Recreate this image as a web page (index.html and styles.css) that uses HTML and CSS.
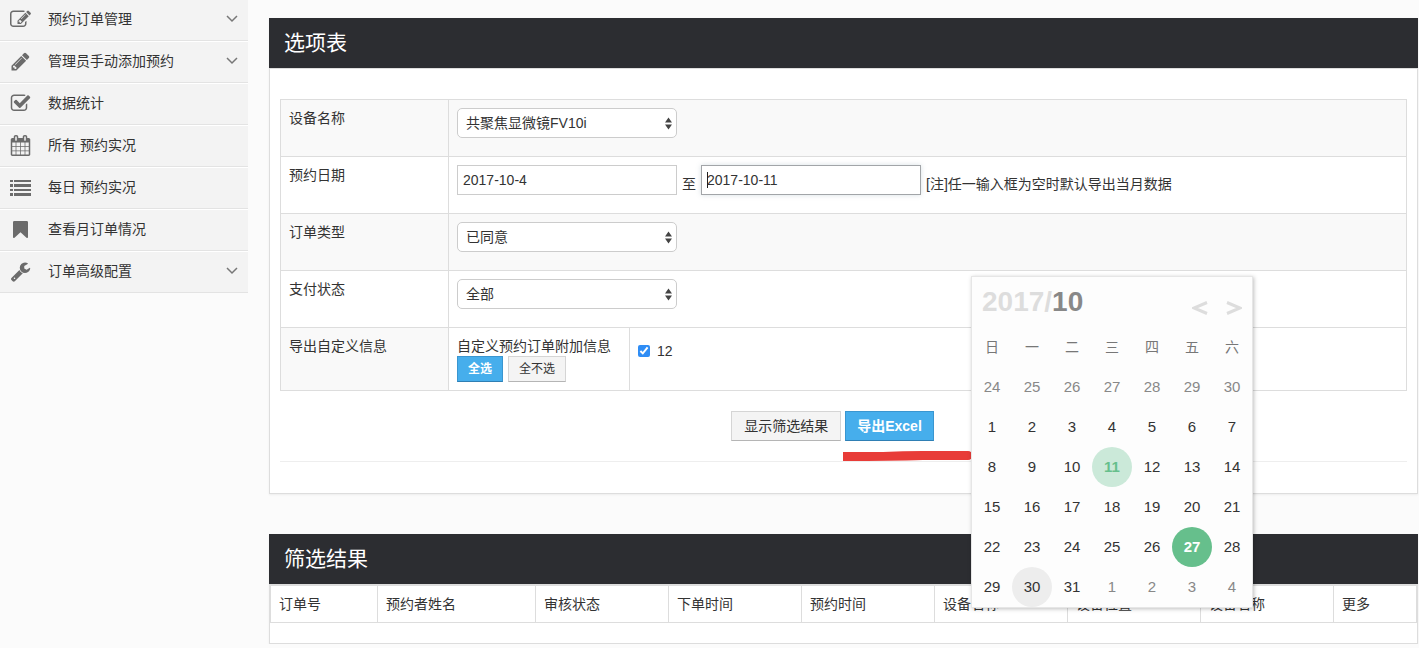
FILE: index.html
```html
<!DOCTYPE html>
<html lang="zh-CN">
<head>
<meta charset="utf-8">
<title>选项表</title>
<link rel="stylesheet" href="styles.css">
</head>
<body>
<div class="layout">
  <nav class="sidebar">
    <a class="nav-item" href="#">
      <svg class="nav-icon" viewBox="0 0 1792 1792"><path d="M888 1184l116-116-152-152-116 116v56h96v96h56zm440-720q-16-16-33 1l-350 350q-17 17-1 33t33-1l350-350q17-17 1-33zm80 594v190q0 119-84.5 203.5t-203.5 84.5h-832q-119 0-203.5-84.5t-84.5-203.5v-832q0-119 84.5-203.5t203.5-84.5h832q63 0 117 25 15 7 18 23 3 17-9 29l-49 49q-14 14-32 8-23-6-45-6h-832q-66 0-113 47t-47 113v832q0 66 47 113t113 47h832q66 0 113-47t47-113v-126q0-13 9-22l64-64q15-15 35-7t20 29zm-96-738l288 288-672 672h-288v-288zm444 132l-92 92-288-288 92-92q28-28 68-28t68 28l152 152q28 28 28 68t-28 68z"/></svg>
      <span class="nav-text">预约订单管理</span>
      <svg class="nav-arrow" viewBox="0 0 12 8"><path d="M1 1l5 5 5-5"/></svg>
    </a>
    <a class="nav-item" href="#">
      <svg class="nav-icon" viewBox="0 0 1792 1792"><path d="M491 1536l91-91-235-235-91 91v107h128v128h107zm523-928q0-22-22-22-10 0-17 7l-542 542q-7 7-7 17 0 22 22 22 10 0 17-7l542-542q7-7 7-17zm-54-192l416 416-832 832h-416v-416zm683 96q0 53-37 90l-166 166-416-416 166-165q36-38 90-38 53 0 91 38l235 234q37 39 37 91z"/></svg>
      <span class="nav-text">管理员手动添加预约</span>
      <svg class="nav-arrow" viewBox="0 0 12 8"><path d="M1 1l5 5 5-5"/></svg>
    </a>
    <a class="nav-item" href="#">
      <svg class="nav-icon" viewBox="0 0 1792 1792"><path d="M1472 930v318q0 119-84.5 203.5t-203.5 84.5h-832q-119 0-203.5-84.5t-84.5-203.5v-832q0-119 84.5-203.5t203.5-84.5h832q63 0 117 25 15 7 18 23 3 17-9 29l-49 49q-10 10-23 10-3 0-9-2-23-6-45-6h-832q-66 0-113 47t-47 113v832q0 66 47 113t113 47h832q66 0 113-47t47-113v-254q0-13 9-22l64-64q10-10 23-10 6 0 12 3 20 8 20 29zm231-489l-814 814q-24 24-57 24t-57-24l-430-430q-24-24-24-57t24-57l110-110q24-24 57-24t57 24l263 263 647-647q24-24 57-24t57 24l110 110q24 24 24 57t-24 57z"/></svg>
      <span class="nav-text">数据统计</span>
    </a>
    <a class="nav-item" href="#">
      <svg class="nav-icon" viewBox="0 0 1792 1792"><path d="M192 1664h288v-288h-288v288zm352 0h320v-288h-320v288zm-352-352h288v-320h-288v320zm352 0h320v-320h-320v320zm-352-384h288v-288h-288v288zm736 736h320v-288h-320v288zm-384-736h320v-288h-320v288zm768 736h288v-288h-288v288zm-384-352h320v-320h-320v320zm-352-864v-288q0-13-9.5-22.5t-22.5-9.5h-64q-13 0-22.5 9.5t-9.5 22.5v288q0 13 9.5 22.5t22.5 9.5h64q13 0 22.5-9.5t9.5-22.5zm736 864h288v-320h-288v320zm-384-384h320v-288h-320v288zm384 0h288v-288h-288v288zm32-480v-288q0-13-9.5-22.5t-22.5-9.5h-64q-13 0-22.5 9.5t-9.5 22.5v288q0 13 9.5 22.5t22.5 9.5h64q13 0 22.5-9.5t9.5-22.5zm384-64v1280q0 52-38 90t-90 38h-1408q-52 0-90-38t-38-90v-1280q0-52 38-90t90-38h128v-96q0-66 47-113t113-47h64q66 0 113 47t47 113v96h384v-96q0-66 47-113t113-47h64q66 0 113 47t47 113v96h128q52 0 90 38t38 90z"/></svg>
      <span class="nav-text">所有 预约实况</span>
    </a>
    <a class="nav-item" href="#">
      <svg class="nav-icon" viewBox="0 0 21 21"><path d="M0 3h3v2H0zM4 3h17v2H4zM0 7h3v3H0zM4 7h17v3H4zM0 12h3v2H0zM4 12h17v2H4zM0 16h3v3H0zM4 16h17v3H4z"/></svg>
      <span class="nav-text">每日 预约实况</span>
    </a>
    <a class="nav-item" href="#">
      <svg class="nav-icon" viewBox="0 0 21 21"><path d="M4.300 2h12.400a1.300 1.300 0 0 1 1.300 1.300V18q0 1.500-1.500.8L10.500 13.300 4.500 18.800Q3 19.500 3 18V3.300A1.300 1.300 0 0 1 4.300 2z"/></svg>
      <span class="nav-text">查看月订单情况</span>
    </a>
    <a class="nav-item" href="#">
      <svg class="nav-icon" viewBox="0 0 1792 1792"><path d="M448 1472q0-26-19-45t-45-19-45 19-19 45 19 45 45 19 45-19 19-45zm644-420l-682 682q-37 37-90 37-52 0-91-37l-106-108q-38-36-38-90 0-53 38-91l681-681q39 98 114.500 173.500t173.500 114.500zm634-435q0 39-23 106-47 134-164.500 217.500t-258.500 83.500q-185 0-316.500-131.500t-131.500-316.500 131.500-316.500 316.500-131.500q58 0 121.500 16.500t107.500 46.500q16 11 16 28t-16 28l-293 169v224l193 107q5-3 79-48.500t135.500-81 70.500-35.500q15 0 23.500 10t8.500 25z"/></svg>
      <span class="nav-text">订单高级配置</span>
      <svg class="nav-arrow" viewBox="0 0 12 8"><path d="M1 1l5 5 5-5"/></svg>
    </a>
  </nav>

  <main class="content">
    <section class="panel">
      <h2 class="panel-title">选项表</h2>
      <div class="panel-body">
        <table class="options">
          <colgroup><col class="col-label"><col class="col-group"><col></colgroup>
          <tbody>
            <tr class="shaded">
              <th><label for="device">设备名称</label></th>
              <td colspan="2">
                <div class="select-box">
                  <select id="device" class="field"><option>共聚焦显微镜FV10i</option></select>
                  <svg class="select-arrows" viewBox="0 0 7 12"><path d="M3.500 0L7 5H0zM0 7h7l-3.500 5z"/></svg>
                </div>
              </td>
            </tr>
            <tr>
              <th><label for="from">预约日期</label></th>
              <td colspan="2">
                <div class="date-row">
                  <input id="from" class="field" type="text" value="2017-10-4">
                  <label for="to">至</label>
                  <div class="caret-box">
                    <input id="to" class="field active" type="text" value="2017-10-11">
                    <span class="caret"></span>
                  </div>
                  <span>[注]任一输入框为空时默认导出当月数据</span>
                </div>
              </td>
            </tr>
            <tr class="shaded">
              <th><label for="type">订单类型</label></th>
              <td colspan="2">
                <div class="select-box">
                  <select id="type" class="field"><option>已同意</option></select>
                  <svg class="select-arrows" viewBox="0 0 7 12"><path d="M3.500 0L7 5H0zM0 7h7l-3.500 5z"/></svg>
                </div>
              </td>
            </tr>
            <tr>
              <th><label for="pay">支付状态</label></th>
              <td colspan="2">
                <div class="select-box">
                  <select id="pay" class="field"><option>全部</option></select>
                  <svg class="select-arrows" viewBox="0 0 7 12"><path d="M3.500 0L7 5H0zM0 7h7l-3.500 5z"/></svg>
                </div>
              </td>
            </tr>
            <tr>
              <th class="shaded-cell">导出自定义信息</th>
              <td>
                <div>自定义预约订单附加信息</div>
                <div class="mini-buttons">
                  <button type="button" class="btn btn-small btn-primary">全选</button>
                  <button type="button" class="btn btn-small">全不选</button>
                </div>
              </td>
              <td class="check-cell">
                <label class="check"><input type="checkbox" checked><span>12</span></label>
              </td>
            </tr>
          </tbody>
        </table>
        <div class="actions">
          <button type="button" class="btn">显示筛选结果</button>
          <div class="marked">
            <button type="button" class="btn btn-primary btn-export">导出Excel</button>
            <svg class="stroke" viewBox="0 0 130 10"><path d="M0 1L40 1Q60 0 80 0H125a4.500 4.500 0 0 1 0 9H80Q50 10 0 10z"/></svg>
          </div>
        </div>
      </div>
    </section>

    <section class="panel">
      <h2 class="panel-title">筛选结果</h2>
      <table class="results">
        <colgroup><col class="r-id"><col class="r-name"><col class="r-std"><col class="r-std"><col class="r-std"><col class="r-std"><col class="r-std"><col class="r-std"><col></colgroup>
        <thead>
          <tr>
            <th>订单号</th><th>预约者姓名</th><th>审核状态</th><th>下单时间</th><th>预约时间</th><th>设备名称</th><th>设备位置</th><th>设备名称</th><th>更多</th>
          </tr>
        </thead>
      </table>
    </section>

    <div class="calendar">
      <div class="cal-head">
        <div class="cal-title"><span class="cal-year">2017/</span>10</div>
        <button type="button" class="cal-nav" aria-label="上个月"><svg viewBox="0 0 16 14"><path d="M15 1.500L2 7l13 5.500"/></svg></button>
        <button type="button" class="cal-nav" aria-label="下个月"><svg viewBox="0 0 16 14"><path d="M1 1.500L14 7 1 12.500"/></svg></button>
      </div>
      <table class="cal-grid">
        <thead><tr><th>日</th><th>一</th><th>二</th><th>三</th><th>四</th><th>五</th><th>六</th></tr></thead>
        <tbody>
          <tr class="other"><td>24</td><td>25</td><td>26</td><td>27</td><td>28</td><td>29</td><td>30</td></tr>
          <tr><td>1</td><td>2</td><td>3</td><td>4</td><td>5</td><td>6</td><td>7</td></tr>
          <tr><td>8</td><td>9</td><td>10</td><td class="picked">11</td><td>12</td><td>13</td><td>14</td></tr>
          <tr><td>15</td><td>16</td><td>17</td><td>18</td><td>19</td><td>20</td><td>21</td></tr>
          <tr><td>22</td><td>23</td><td>24</td><td>25</td><td>26</td><td class="today">27</td><td>28</td></tr>
          <tr><td>29</td><td class="hovered">30</td><td>31</td><td class="other">1</td><td class="other">2</td><td class="other">3</td><td class="other">4</td></tr>
        </tbody>
      </table>
    </div>
  </main>
</div>
</body>
</html>
```
FILE: styles.css
```css
* { box-sizing: border-box; }

body {
  margin: 0;
  background: #fbfbfb;
  color: #333;
  font: 14px/20px "Liberation Sans", "Noto Sans CJK SC", sans-serif;
}

button, input, select { font: inherit; color: inherit; }

.layout { display: flex; align-items: flex-start; }

/* Sidebar */
.sidebar { flex: 0 0 248px; }

.nav-item {
  display: flex;
  align-items: center;
  height: 42px;
  padding: 0 10px 2px;
  background: #f3f3f3;
  border-top: 1px solid #fff;
  border-bottom: 1px solid #e3e3e3;
  color: #333;
  text-decoration: none;
}
.nav-item:first-child { height: 41px; border-top: 0; }

.nav-icon { width: 21px; height: 21px; fill: #6b6b6b; }
.nav-text { flex: 1; padding-left: 17px; }
.nav-arrow { width: 12px; height: 8px; fill: none; stroke: #777; stroke-width: 1.500; }

/* Panels */
.content {
  position: relative;
  flex: 1;
  min-width: 0;
  padding: 18px 1px 0 21px;
}

.panel {
  margin-bottom: 40px;
  background: #fff;
  border: 1px solid #ddd;
  border-top: 0;
  box-shadow: 0 1px 2px rgba(0, 0, 0, 0.06);
}
.panel:last-of-type { margin-bottom: 0; padding-bottom: 20px; }

.panel-title {
  margin: 0 -1px;
  padding: 0 15px;
  background: #2c2d31;
  color: #fff;
  font-size: 21px;
  font-weight: 400;
  line-height: 50px;
}

.panel-body {
  padding: 30px 10px 31px;
  border-top: 1px solid #ddd;
}

.options {
  width: 100%;
  table-layout: fixed;
  border-collapse: collapse;
}
.col-label { width: 168px; }
.col-group { width: 181px; }
.options th, .options td {
  padding: 8px;
  border: 1px solid #ddd;
  font-weight: 400;
  text-align: left;
  vertical-align: top;
}
.shaded, .shaded-cell { background: #f9f9f9; }

.field {
  width: 220px;
  height: 30px;
  padding: 0 5px;
  border: 1px solid #ccc;
  background: #fff;
}
.active { border-color: #a2a5a8; box-shadow: 0 0 5px rgba(100, 130, 150, 0.25); outline: 0; }

.select-box { position: relative; width: 220px; margin-bottom: 10px; }
.select-box .field {
  display: block;
  padding: 0 8px;
  border-radius: 5px;
  appearance: none;
}
.select-arrows { position: absolute; top: 9px; right: 5px; width: 7px; height: 13px; fill: #444; }

.date-row { display: flex; align-items: flex-end; gap: 5px; margin-bottom: 10px; line-height: 22px; }
.caret-box { position: relative; display: flex; }
.caret { position: absolute; top: 7px; left: 6px; width: 1px; height: 16px; background: #222; }

.mini-buttons { display: flex; gap: 5px; }

.btn {
  height: 30px;
  padding: 0 12px;
  background: #f4f4f4;
  border: 1px solid #d5d5d5;
  border-bottom-color: #b5b5b5;
  line-height: 28px;
}
.btn-primary {
  background: #46aeec;
  border-color: #3a96d0;
  border-bottom-color: #2f7fb4;
  color: #fff;
  font-weight: 700;
}
.btn-export { padding: 0 11px; }
.btn-small { height: 26px; padding: 0 10px; font-size: 12px; line-height: 24px; }

.options .check-cell { padding-top: 13px; }
.check { display: flex; align-items: center; gap: 7px; }
.check input { width: 12px; height: 12px; margin: 0; accent-color: #2f8df5; }

.actions {
  display: flex;
  justify-content: center;
  gap: 4px;
  padding: 20px 22px 20px 0;
  border-bottom: 1px solid #eee;
}
.marked { position: relative; }
.stroke { position: absolute; top: 40px; left: -2px; width: 130px; height: 10px; fill: #e83c38; }

/* Results table */
.results {
  width: 100%;
  table-layout: fixed;
  border-collapse: collapse;
}
.r-id { width: 107px; }
.r-name { width: 158px; }
.r-std { width: 133px; }
.results th {
  padding: 8px;
  border: 1px solid #ddd;
  border-top-width: 2px;
  font-weight: 400;
  text-align: left;
}

/* Date picker */
.calendar {
  position: absolute;
  top: 276px;
  left: 723px;
  width: 282px;
  background: #fdfdfd;
  border: 1px solid #e6e6e6;
  box-shadow: 1px 1px 4px rgba(0, 0, 0, 0.25);
}
.cal-head { display: flex; align-items: center; height: 50px; padding: 0 10px; gap: 18px; }
.cal-title { flex: 1; color: #888; font-size: 28px; font-weight: 700; }
.cal-year { color: #ddd; }
.cal-nav { width: 16px; height: 14px; margin-top: 12px; padding: 0; border: 0; background: none; }
.cal-nav svg { display: block; width: 16px; height: 14px; fill: none; stroke: #ddd; stroke-width: 3; }

.cal-grid { border-collapse: collapse; table-layout: fixed; width: 280px; }
.cal-grid th, .cal-grid td {
  width: 40px;
  height: 40px;
  padding: 0;
  border-radius: 50%;
  font-size: 15px;
  text-align: center;
}
.cal-grid th { color: #777; font-size: 14px; font-weight: 400; }
.cal-grid .other, .other td { color: #888; }
.cal-grid .picked { background: #cbe9d9; color: #66bf8c; font-weight: 700; }
.cal-grid .today { background: #66bf8c; color: #fff; font-weight: 700; }
.cal-grid .hovered { background: #ededed; }
```
